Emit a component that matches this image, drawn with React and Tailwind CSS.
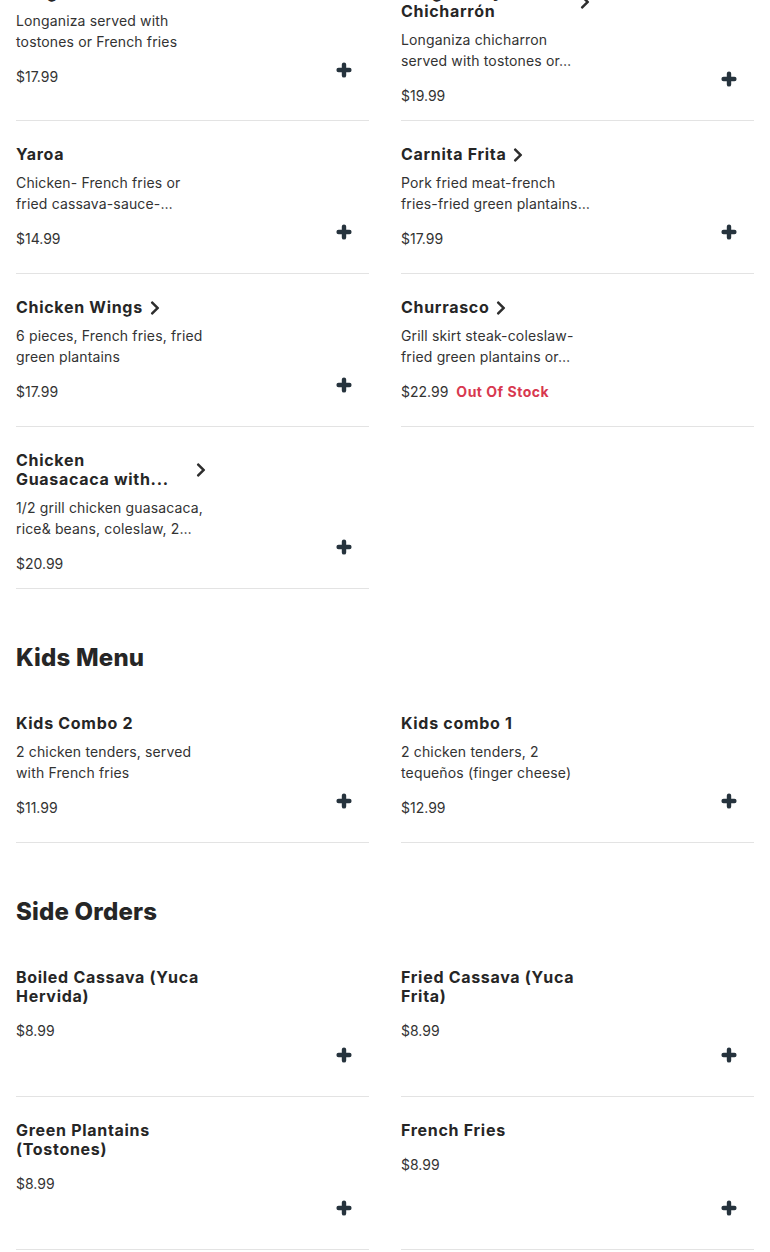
import React from "react";
import { FaChevronRight } from "react-icons/fa";

const FONT = { fontFamily: "Inter, 'Open Sans', sans-serif" };

function PlusIcon() {
  return (
    <svg width="16" height="16" viewBox="0 0 16 16" className="block">
      <path
        d="M2.6 8H13.4M8 2.6V13.4"
        stroke="currentColor"
        strokeWidth="4.4"
        strokeLinecap="round"
        fill="none"
      />
    </svg>
  );
}

function Card({ item }) {
  if (!item) return <div />;
  return (
    <div className="border-b border-[#e3e3e3]">
      <div className="flex min-h-[152px] pt-6 pb-[14px]">
        <div className="flex-1 min-w-0">
          <div className="flex items-center">
            <div
              className={
                "text-[16px] leading-[19px] font-bold tracking-[0.7px] text-[#262626] whitespace-nowrap " +
                (item.titleW || "")
              }
            >
              {item.title.map((l, i) => (
                <div key={i}>{l}</div>
              ))}
            </div>
            {item.chevron && (
              <FaChevronRight size={16} className="shrink-0 ml-1 text-[#2e2e2e]" />
            )}
          </div>
          {item.desc && (
            <div className="mt-2 text-[14px] leading-[21px] tracking-[0.15px] text-[#333] whitespace-nowrap">
              {item.desc.map((l, i) => (
                <div key={i}>{l}</div>
              ))}
            </div>
          )}
          <div className="mt-[14px] flex items-center text-[14px] leading-[21px] text-[#333]">
            <span>{item.price}</span>
            {item.oos && (
              <span className="ml-2 font-bold tracking-[0.5px] text-[#d8384f]">Out Of Stock</span>
            )}
          </div>
        </div>
        {!item.oos && (
          <div className="self-end mb-[19px] mr-[17px] text-[#26333d]">
            <PlusIcon />
          </div>
        )}
      </div>
    </div>
  );
}

function Grid({ rows, className = "" }) {
  return (
    <div className={"grid grid-cols-2 gap-x-8 " + className}>
      {rows.flat().map((it, i) => (
        <Card key={i} item={it} />
      ))}
    </div>
  );
}

const main = [
  [
    {
      title: ["Longaniza"],
      desc: ["Longaniza served with", "tostones or French fries"],
      price: "$17.99",
    },
    {
      title: ["Longaniza y", "Chicharrón"],
      titleW: "w-[172px]",
      chevron: true,
      desc: ["Longaniza chicharron", "served with tostones or…"],
      price: "$19.99",
    },
  ],
  [
    {
      title: ["Yaroa"],
      desc: ["Chicken- French fries or", "fried cassava-sauce-…"],
      price: "$14.99",
    },
    {
      title: ["Carnita Frita"],
      chevron: true,
      desc: ["Pork fried meat-french", "fries-fried green plantains…"],
      price: "$17.99",
    },
  ],
  [
    {
      title: ["Chicken Wings"],
      chevron: true,
      desc: ["6 pieces, French fries, fried", "green plantains"],
      price: "$17.99",
    },
    {
      title: ["Churrasco"],
      chevron: true,
      desc: ["Grill skirt steak-coleslaw-", "fried green plantains or…"],
      price: "$22.99",
      oos: true,
    },
  ],
  [
    {
      title: ["Chicken", "Guasacaca with..."],
      titleW: "w-[173px]",
      chevron: true,
      desc: ["1/2 grill chicken guasacaca,", "rice& beans, coleslaw, 2…"],
      price: "$20.99",
    },
    null,
  ],
];

const kids = [
  [
    {
      title: ["Kids Combo 2"],
      desc: ["2 chicken tenders, served", "with French fries"],
      price: "$11.99",
    },
    {
      title: ["Kids combo 1"],
      desc: ["2 chicken tenders, 2", "tequeños (finger cheese)"],
      price: "$12.99",
    },
  ],
];

const sides = [
  [
    { title: ["Boiled Cassava (Yuca", "Hervida)"], price: "$8.99" },
    { title: ["Fried Cassava (Yuca", "Frita)"], price: "$8.99" },
  ],
  [
    { title: ["Green Plantains", "(Tostones)"], price: "$8.99" },
    { title: ["French Fries"], price: "$8.99" },
  ],
];

export default function App() {
  return (
    <div className="bg-white min-h-screen overflow-hidden" style={FONT}>
      <div className="px-4 -mt-[41px]">
        <Grid rows={main} />
        <h2 className="mt-[53px] text-[24px] leading-[32px] font-extrabold tracking-[0.2px] text-[#262626]">
          Kids Menu
        </h2>
        <Grid rows={kids} className="mt-4" />
        <h2 className="mt-[53px] text-[24px] leading-[32px] font-extrabold tracking-[0.2px] text-[#262626]">
          Side Orders
        </h2>
        <Grid rows={sides} className="mt-4" />
      </div>
    </div>
  );
}
